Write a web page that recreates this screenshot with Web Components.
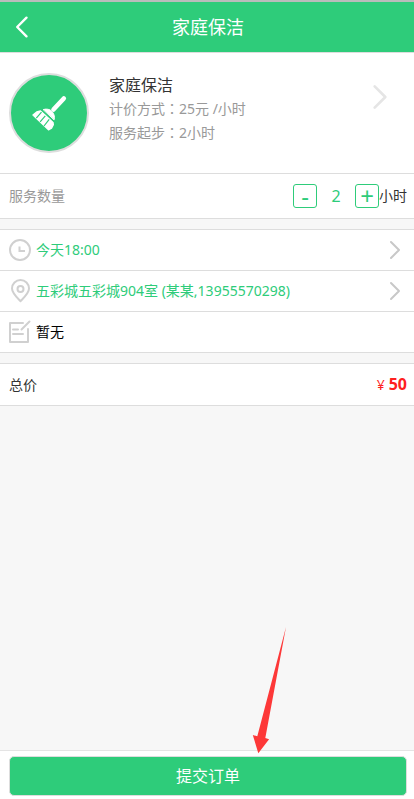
<!DOCTYPE html>
<html lang="zh-CN">
<head>
<meta charset="utf-8">
<meta name="viewport" content="width=device-width, initial-scale=1">
<title>家庭保洁</title>
<style>
html, body { margin: 0; height: 100%; }
body {
  --green: #2ecc7a;
  --line: #ddd;
  --muted: #999;
  font: 14px/20px "Noto Sans", "Noto Sans CJK SC", sans-serif;
  color: #333;
  background: #f7f7f7;
}
</style>
</head>
<body>
<order-page></order-page>
<script>
const define = (name, html, setup) => {
  const template = document.createElement('template');
  template.innerHTML = html;
  customElements.define(name, class extends HTMLElement {
    constructor() {
      super();
      this.attachShadow({ mode: 'open' }).append(template.content.cloneNode(true));
      if (setup) setup(this, this.shadowRoot);
    }
  });
};

define('chevron-icon', `
<style>
:host { display: block; flex: none; width: 12px; height: 20px; color: #c8c8c8; }
:host([large]) { width: 16px; height: 28px; color: #e5e5e5; }
svg { display: block; width: 100%; height: 100%; }
</style>
<svg viewBox="0 0 12 20" fill="none" stroke="currentColor" stroke-width="2" stroke-linecap="round" stroke-linejoin="round" aria-hidden="true"><path d="M2 2l8 8-8 8"/></svg>`);

define('page-header', `
<style>
:host { display: block; background: var(--green); color: #fff; border-top: 2px solid #b9bcbb; border-bottom: 1px solid var(--line); }
header { display: grid; grid-template-columns: 44px 1fr 42px; align-items: center; height: 50px; }
button { display: grid; place-items: center; height: 50px; padding: 0; border: 0; background: none; color: inherit; }
h1 { margin: 0; font-size: 18px; line-height: 28px; font-weight: 400; text-align: center; }
</style>
<header>
  <button type="button" aria-label="返回"><svg width="14" height="22" viewBox="0 0 14 22" fill="none" stroke="currentColor" stroke-width="2.4" stroke-linecap="round" stroke-linejoin="round"><path d="M11.5 1.7L2.2 11l9.3 9.3"/></svg></button>
  <h1><slot></slot></h1>
</header>`);

define('service-card', `
<style>
:host { display: block; background: #fff; border-bottom: 1px solid var(--line); }
a { display: flex; align-items: flex-start; gap: 20px; padding: 20px 26px 20px 9px; color: inherit; text-decoration: none; }
.badge { flex: none; box-sizing: border-box; width: 80px; height: 80px; border: 2px solid var(--line); border-radius: 50%; background: var(--green); }
.badge svg { display: block; }
.info { display: grid; grid-auto-rows: 24px; flex: 1; min-width: 0; color: var(--muted); line-height: 22px; }
.name { color: #333; font-size: 16px; line-height: 24px; }
chevron-icon { margin-top: 10px; }
</style>
<a href="#service">
  <span class="badge"><svg width="76" height="76" viewBox="11 75 76 76" fill="#fff" stroke="#fff" stroke-linecap="round" stroke-linejoin="round" aria-hidden="true">
    <path d="M53.500 109.500L63.800 98.500" stroke-width="4.600"/>
    <path d="M43.500 109.500c3-1 6.500-.3 8.500 2s3 5 2.200 8z" stroke-width="1"/>
    <path d="M40.500 111L53 122.500l.3 2.200-1.800 3.500-3 1.600L33 115l3.700-3z" stroke-width="1.400"/>
    <g stroke="#2ecc7a" stroke-linecap="butt" fill="none"><path d="M41 109.300L54.500 121.800" stroke-width="1"/><path d="M41.500 112.200l-5.200 6M45.300 115.800l-5.200 6M49.200 119.400l-5.200 6.600" stroke-width="1.200"/></g>
  </svg></span>
  <div class="info"><div class="name"><slot name="name"></slot></div><slot></slot></div>
  <chevron-icon large></chevron-icon>
</a>`);

define('quantity-row', `
<style>
:host { display: flex; align-items: center; justify-content: space-between; height: 44px; padding: 0 7px 0 9px; background: #fff; border-bottom: 1px solid var(--line); }
label { color: var(--muted); }
.stepper { display: flex; align-items: center; }
button { display: grid; place-items: center; box-sizing: border-box; width: 24px; height: 24px; padding: 0; border: 1px solid var(--green); border-radius: 3px; background: #fff; color: var(--green); font: 24px/22px "Noto Sans", sans-serif; }
input { box-sizing: border-box; width: 38px; height: 24px; padding: 0; border: 0; background: none; color: var(--green); font: 16px/24px "Noto Sans", sans-serif; text-align: center; }
</style>
<label for="count">服务数量</label>
<div class="stepper">
  <button type="button" class="minus" aria-label="减少">-</button>
  <input id="count" type="text" inputmode="numeric" value="2">
  <button type="button" class="plus" aria-label="增加">+</button>
  <span>小时</span>
</div>`, (host, root) => {
  const input = root.querySelector('input');
  const step = n => {
    input.value = Math.max(2, (parseInt(input.value, 10) || 2) + n);
    host.dispatchEvent(new CustomEvent('quantity-change', { bubbles: true, composed: true, detail: Number(input.value) }));
  };
  root.querySelector('.minus').addEventListener('click', () => step(-1));
  root.querySelector('.plus').addEventListener('click', () => step(1));
});

define('row-group', `
<style>:host { display: block; margin-top: 10px; border-top: 1px solid var(--line); }</style><slot></slot>`);

define('detail-row', `
<style>
:host { display: block; color: var(--green); background: #fff; border-bottom: 1px solid var(--line); }
:host([plain]) { color: #000; }
a { display: flex; align-items: center; gap: 5px; height: 40px; padding: 0 13px 0 9px; color: inherit; text-decoration: none; }
.text { flex: 1; min-width: 0; }
:host([plain]) chevron-icon { display: none; }
::slotted(svg) { display: block; flex: none; width: 22px; height: 24px; fill: none; stroke: #d0d0d0; stroke-width: 2; stroke-linecap: round; stroke-linejoin: round; }
</style>
<a href="#detail"><slot name="icon"></slot><span class="text"><slot></slot></span><chevron-icon></chevron-icon></a>`);

define('total-row', `
<style>
:host { display: flex; align-items: center; justify-content: space-between; height: 41px; padding: 0 7px 0 9px; background: #fff; border-bottom: 1px solid var(--line); }
.price { display: flex; align-items: baseline; gap: 4px; color: #fe2020; }
strong { font-size: 16px; }
</style>
<span>总价</span><span class="price"><span>¥</span><strong><slot></slot></strong></span>`);

define('submit-bar', `
<style>
:host { display: block; position: relative; margin-top: auto; padding: 5px 7px 3px 9px; background: #fff; border-top: 1px solid #e4e4e4; }
button { display: block; box-sizing: border-box; width: 100%; height: 40px; padding: 0; border: 1px solid var(--line); border-radius: 5px; background: var(--green); color: #fff; font: inherit; font-size: 16px; }
.pointer { position: absolute; bottom: 45px; right: 126px; pointer-events: none; }
</style>
<button type="button"><slot></slot></button>
<svg class="pointer" width="36" height="128" viewBox="252 626 36 128" fill="#fd3838" aria-hidden="true"><path d="M286 627L265.300 738l3.800 1.200-10.800 14-5.500-18.200 4.500 1.300z"/></svg>`);

define('order-page', `
<style>
:host { display: flex; flex-direction: column; min-height: 100%; }
.colon { font-family: "Noto Sans CJK JP", sans-serif; }
</style>
<page-header>家庭保洁</page-header>
<service-card>
  <span slot="name">家庭保洁</span>
  <div>计价方式<span class="colon" lang="ja">：</span>25元 /小时</div>
  <div>服务起步<span class="colon" lang="ja">：</span>2小时</div>
</service-card>
<quantity-row></quantity-row>
<row-group>
  <detail-row><svg slot="icon" viewBox="0 0 22 24" aria-hidden="true"><circle cx="11" cy="12" r="10"/><path d="M10.500 8.500v4.500h5.500" stroke-linecap="butt" stroke-linejoin="miter"/></svg>今天18:00</detail-row>
  <detail-row><svg slot="icon" viewBox="0 0 22 24" aria-hidden="true"><path d="M11.500 22.200C8 18.500 3 14 3 9.500a8.500 8.500 0 0 1 17 0c0 4.500-5 9-8.500 12.700z"/><circle cx="11.500" cy="10" r="3"/></svg>五彩城五彩城904室 (某某,13955570298)</detail-row>
  <detail-row plain><svg slot="icon" viewBox="0 0 22 24" aria-hidden="true"><path d="M14 3H1v19h18V9M20.500 1.500l-8 8M4 9.500h5M4 14h10"/></svg>暂无</detail-row>
</row-group>
<row-group><total-row>50</total-row></row-group>
<submit-bar>提交订单</submit-bar>`, (host, root) => {
  root.addEventListener('quantity-change', e => {
    root.querySelector('total-row').textContent = e.detail * 25;
  });
});
</script>
</body>
</html>
